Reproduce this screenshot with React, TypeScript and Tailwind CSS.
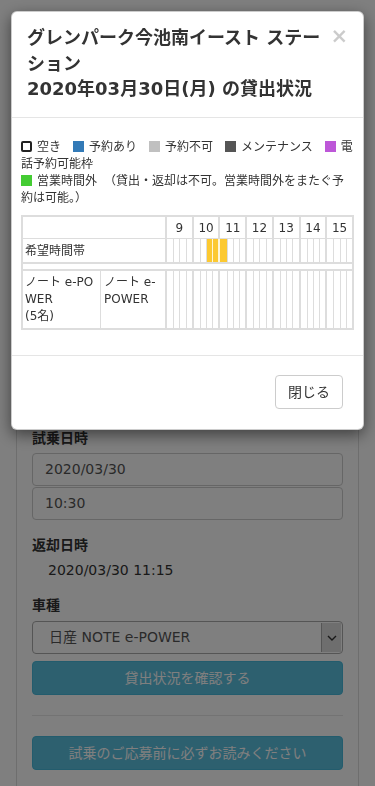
import React from "react";

const hours = [9, 10, 11, 12, 13, 14, 15];
const yellow = new Set([6, 7, 8]);

function Sq({ cls }: { cls: string }) {
  return <span className={cls} />;
}

function SlotRow({ highlight }: { highlight: boolean }) {
  return (
    <div className="flex-1 grid grid-cols-7">
      {hours.map((h, g) => (
        <div
          key={h}
          className={
            highlight && g === 2
              ? "grid grid-cols-4 border-l-2 border-[#fff6d6]"
              : "grid grid-cols-4 border-l-2 border-[#dddddd]"
          }
        >
          {[0, 1, 2, 3].map((s) => {
            const idx = g * 4 + s;
            const on = highlight && yellow.has(idx);
            const leftWhite = highlight && idx === 7;
            let cls = "";
            if (s > 0) {
              cls = leftWhite
                ? "border-l border-[#fff6d6]"
                : "border-l border-[#dddddd]";
            }
            return (
              <div
                key={s}
                className={on ? cls + " bg-[#fcc931]" : cls}
              />
            );
          })}
        </div>
      ))}
    </div>
  );
}

export default function App() {
  const font =
    "font-['DejaVu_Sans','Noto_Sans_CJK_JP',sans-serif]";
  return (
    <div className={"relative min-h-[786px] bg-white text-[#333] " + font}>
      {/* page behind */}
      <div className="px-4 pt-[15px] pb-[40px]">
        <div className="border border-[#dddddd] rounded-[4px] px-[15px] pt-[15px] pb-[30px]">
          <div className="h-[397px]" />
          <div className="text-[14px] leading-[20px] font-bold mb-[5px]">
            試乗日時
          </div>
          <div className="h-[33px] border border-[#cccccc] rounded-[4px] px-[12px] flex items-center text-[14px] text-[#555]">
            2020/03/30
          </div>
          <div className="mt-[1px] h-[33px] border border-[#cccccc] rounded-[4px] px-[12px] flex items-center text-[14px] text-[#555]">
            10:30
          </div>
          <div className="mt-[15px] text-[14px] leading-[20px] font-bold mb-[5px]">
            返却日時
          </div>
          <div className="pl-[16px] text-[14px] leading-[20px]">
            2020/03/30 11:15
          </div>
          <div className="mt-[15px] text-[14px] leading-[20px] font-bold mb-[6px]">
            車種
          </div>
          <div className="h-[33px] border border-[#aaaaaa] rounded-[4px] flex items-stretch text-[14px] text-[#555]">
            <div className="flex-1 flex items-center pl-[16px]">
              日産 NOTE e-POWER
            </div>
            <div className="w-[20px] my-[1px] mr-[1px] bg-[#dcdcdc] border-l border-[#aaaaaa] flex items-center justify-center">
              <svg width="10" height="6" viewBox="0 0 10 6">
                <polyline
                  points="1,1 5,5 9,1"
                  fill="none"
                  stroke="#333"
                  strokeWidth="1.4"
                />
              </svg>
            </div>
          </div>
          <div className="mt-[7px] h-[34px] rounded-[4px] bg-[#5bc0de] border border-[#46b8da] flex items-center justify-center text-[14px] text-white">
            貸出状況を確認する
          </div>
          <div className="my-[20px] border-t border-[#e6e6e6]" />
          <div className="h-[34px] rounded-[4px] bg-[#5bc0de] border border-[#46b8da] flex items-center justify-center text-[14px] text-white">
            試乗のご応募前に必ずお読みください
          </div>
        </div>
      </div>

      {/* overlay */}
      <div className="fixed inset-0 bg-black/50 px-[11px] pt-[11px]">
        <div className="bg-white border border-black/20 rounded-[6px] shadow-[0_5px_15px_rgba(0,0,0,0.5)]">
          <div className="flex items-start pt-[13px] pb-[15px] px-[15px] border-b border-[#e5e5e5]">
            <div className="flex-1 text-[18px] leading-[25.7px] font-bold text-[#333]">
              グレンパーク今池南イースト ステーション
              <br />
              2020年03月30日(月) の貸出状況
            </div>
            <div className="ml-[4px] mt-[1px] text-[21px] leading-none font-bold text-black opacity-20">
              ×
            </div>
          </div>

          <div className="pt-[21px] px-[9px] pb-[25px]">
            <div className="text-[12px] leading-[17px] text-[#333]">
              <Sq cls="inline-block w-[11px] h-[11px] mr-[5px] align-[-1px] border-2 border-[#222] rounded-[2px]" />
              空き
              <Sq cls="inline-block w-[11px] h-[11px] ml-[12px] mr-[5px] align-[-1px] bg-[#337ab7]" />
              予約あり
              <Sq cls="inline-block w-[11px] h-[11px] ml-[12px] mr-[5px] align-[-1px] bg-[#c0c0c0]" />
              予約不可
              <Sq cls="inline-block w-[11px] h-[11px] ml-[12px] mr-[5px] align-[-1px] bg-[#555555]" />
              メンテナンス
              <Sq cls="inline-block w-[11px] h-[11px] ml-[12px] mr-[5px] align-[-1px] bg-[#bd57d8]" />
              電話予約可能枠
              <br />
              <Sq cls="inline-block w-[11px] h-[11px] mr-[5px] align-[-1px] bg-[#44cc33]" />
              営業時間外
              <Sq cls="inline-block w-[7px] h-[1px]" />
              （貸出・返却は不可。営業時間外をまたぐ予約は可能。）
            </div>

            <div className="mt-[8px] border-2 border-[#dddddd] text-[12px] text-[#333]">
              <div className="flex h-[22px] border-b border-[#dddddd]">
                <div className="w-[142px] shrink-0" />
                <div className="flex-1 grid grid-cols-7">
                  {hours.map((h) => (
                    <div
                      key={h}
                      className="border-l-2 border-[#dddddd] flex items-center justify-center leading-none"
                    >
                      {h}
                    </div>
                  ))}
                </div>
              </div>
              <div className="flex h-[25px] border-b-2 border-[#dddddd]">
                <div className="w-[142px] shrink-0 pl-[2px] flex items-center">
                  希望時間帯
                </div>
                <SlotRow highlight={true} />
              </div>
              <div className="h-[7px] border-b-2 border-[#dddddd]" />
              <div className="flex h-[57px]">
                <div className="w-[78px] shrink-0 border-r border-[#dddddd] pl-[2px] pr-[2px] pt-[3px] leading-[17px] break-all">
                  ノート e-POWER
                  <br />
                  (5名)
                </div>
                <div className="w-[64px] shrink-0 pl-[3px] pr-[2px] pt-[3px] leading-[17px]">
                  ノート e-POWER
                </div>
                <SlotRow highlight={false} />
              </div>
            </div>
          </div>

          <div className="flex justify-end pt-[19px] pb-[20px] px-[20px] border-t border-[#e5e5e5]">
            <div className="h-[34px] px-[12px] border border-[#cccccc] rounded-[4px] bg-white flex items-center text-[14px] text-[#333]">
              閉じる
            </div>
          </div>
        </div>
      </div>
    </div>
  );
}
